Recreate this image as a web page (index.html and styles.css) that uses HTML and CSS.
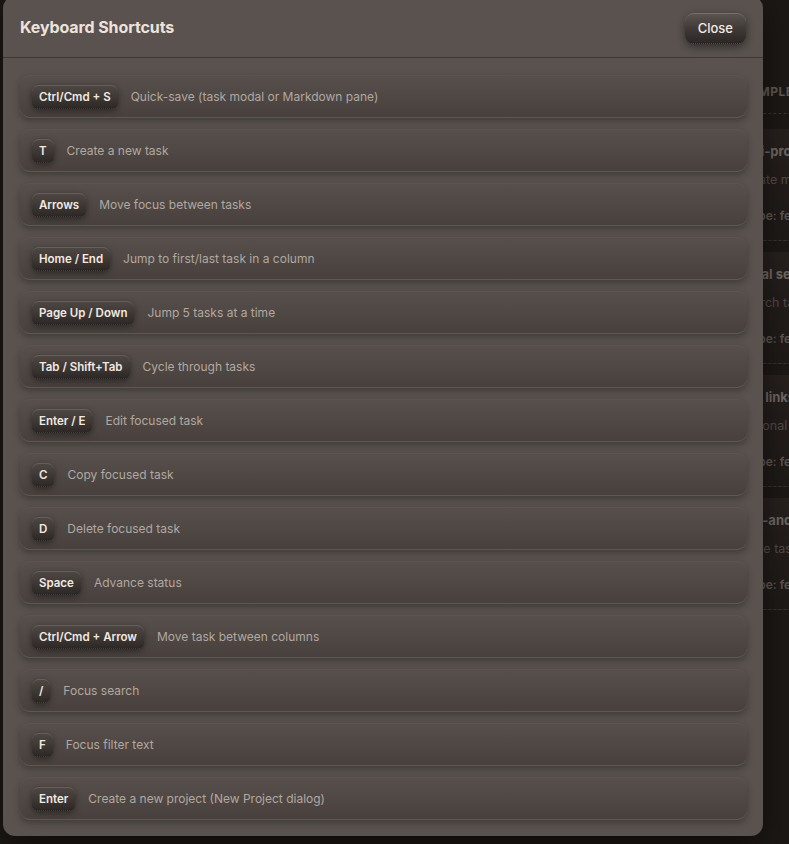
FILE: index.html
```html
<!DOCTYPE html>
<html lang="en">
<head>
<meta charset="utf-8">
<title>Keyboard Shortcuts</title>
<link rel="stylesheet" href="styles.css">
</head>
<body>
<div class="board">
  <div class="column">
    <div class="col-head">EXAMPLE</div>
    <div class="card">
      <div class="card-title">Multi-project</div>
      <div class="card-desc">Create multiple</div>
      <div class="card-meta">Type: feature</div>
    </div>
    <div class="card">
      <div class="card-title">Global search</div>
      <div class="card-desc">Search tasks</div>
      <div class="card-meta">Type: feature</div>
    </div>
    <div class="card">
      <div class="card-title">Task links</div>
      <div class="card-desc">Optional</div>
      <div class="card-meta">Type: feature</div>
    </div>
    <div class="card">
      <div class="card-title">Drag-and-drop</div>
      <div class="card-desc">Move tasks</div>
      <div class="card-meta">Type: feature</div>
    </div>
  </div>
</div>

<div class="modal">
  <div class="modal-header">
    <h2 class="modal-title">Keyboard Shortcuts</h2>
    <button class="close-btn">Close</button>
  </div>
  <div class="shortcut-list">
    <div class="row"><span class="kbd">Ctrl/Cmd + S</span><span class="desc">Quick-save (task modal or Markdown pane)</span></div>
    <div class="row"><span class="kbd">T</span><span class="desc">Create a new task</span></div>
    <div class="row"><span class="kbd">Arrows</span><span class="desc">Move focus between tasks</span></div>
    <div class="row"><span class="kbd">Home / End</span><span class="desc">Jump to first/last task in a column</span></div>
    <div class="row"><span class="kbd">Page Up / Down</span><span class="desc">Jump 5 tasks at a time</span></div>
    <div class="row"><span class="kbd">Tab / Shift+Tab</span><span class="desc">Cycle through tasks</span></div>
    <div class="row"><span class="kbd">Enter / E</span><span class="desc">Edit focused task</span></div>
    <div class="row"><span class="kbd">C</span><span class="desc">Copy focused task</span></div>
    <div class="row"><span class="kbd">D</span><span class="desc">Delete focused task</span></div>
    <div class="row"><span class="kbd">Space</span><span class="desc">Advance status</span></div>
    <div class="row"><span class="kbd">Ctrl/Cmd + Arrow</span><span class="desc">Move task between columns</span></div>
    <div class="row"><span class="kbd">/</span><span class="desc">Focus search</span></div>
    <div class="row"><span class="kbd">F</span><span class="desc">Focus filter text</span></div>
    <div class="row"><span class="kbd">Enter</span><span class="desc">Create a new project (New Project dialog)</span></div>
  </div>
</div>
</body>
</html>
```

FILE: styles.css
```css
html, body {
  margin: 0;
  padding: 0;
  height: 100%;
  overflow: hidden;
}

body {
  background: #1c1815;
  font-family: Inter, "Noto Sans", "Liberation Sans", sans-serif;
  position: relative;
}

/* Background board (dimmed, behind the modal) */
.board {
  display: flex;
  padding: 84px 0 0 728px;
  overflow: hidden;
}

.column {
  flex: 0 0 240px;
  display: flex;
  flex-direction: column;
  gap: 11px;
}

.col-head {
  font-size: 12px;
  font-weight: 700;
  letter-spacing: 0.5px;
  color: #5f5854;
  padding: 0 4px 14px 4px;
  border-bottom: 1px dashed #3a3431;
  margin-bottom: 4px;
  white-space: nowrap;
}

.card {
  height: 112px;
  box-sizing: border-box;
  padding: 14px 4px 0 4px;
  background: linear-gradient(#27211e 0, #221d1a 40px, #1e1a17 100%);
  border-bottom: 1px dashed #3a3431;
  display: flex;
  flex-direction: column;
  gap: 13px;
  white-space: nowrap;
}

.card-title {
  font-size: 13px;
  font-weight: 700;
  color: #6e6762;
}

.card-desc {
  font-size: 12.5px;
  color: #524b47;
  padding-left: 6px;
}

.card-meta {
  font-size: 12px;
  font-weight: 600;
  color: #5d5652;
  margin-top: 8px;
  padding-left: 12px;
}

/* Modal */
.modal {
  position: absolute;
  left: 3px;
  top: -4px;
  width: 760px;
  box-sizing: border-box;
  background: #59524e;
  border-radius: 12px;
  box-shadow: 0 10px 30px rgba(0, 0, 0, 0.5);
  display: flex;
  flex-direction: column;
}

.modal-header {
  height: 61px;
  box-sizing: content-box;
  display: flex;
  align-items: center;
  justify-content: space-between;
  padding: 0 17px 0 17px;
  border-bottom: 1px solid #3f3936;
}

.modal-title {
  margin: 0;
  font-size: 16px;
  font-weight: 700;
  color: #ece4dc;
  letter-spacing: -0.1px;
  padding-top: 0;
}

.close-btn {
  font-family: inherit;
  font-size: 13px;
  font-weight: 500;
  color: #f2ebe4;
  height: 31px;
  padding: 0 13px;
  margin-top: 3px;
  border-radius: 9px;
  border: none;
  border-top: 1px solid #77706a;
  border-bottom: 1px dotted #1c1816;
  background: linear-gradient(#5a534f 0%, #403a37 50%, #2c2724 100%);
  box-shadow: 0 3px 8px rgba(0, 0, 0, 0.45);
}

.shortcut-list {
  display: flex;
  flex-direction: column;
  gap: 11px;
  padding: 17px 16px 16px 17px;
}

.row {
  height: 43px;
  box-sizing: border-box;
  display: flex;
  align-items: center;
  gap: 13px;
  padding: 0 12px;
  border-radius: 10px;
  border-top: 1px solid #5b544f;
  border-bottom: 1px solid #5f5752;
  background: linear-gradient(#564f4b 0%, #4e4743 55%, #47403c 100%);
  box-shadow: 0 3px 7px rgba(0, 0, 0, 0.28);
}

.kbd {
  height: 24px;
  box-sizing: border-box;
  display: inline-flex;
  align-items: center;
  padding: 0 7px;
  font-size: 11.5px;
  font-weight: 600;
  color: #f1e9e2;
  border-radius: 7px;
  border-top: 1px solid #655e59;
  border-bottom: 1px dotted #1d1917;
  background: linear-gradient(#4d4642 0%, #3f3936 50%, #2d2825 100%);
  box-shadow: 0 2px 6px rgba(0, 0, 0, 0.4);
  white-space: nowrap;
}

.desc {
  font-size: 12px;
  color: #b1a8a1;
  white-space: nowrap;
}
```
